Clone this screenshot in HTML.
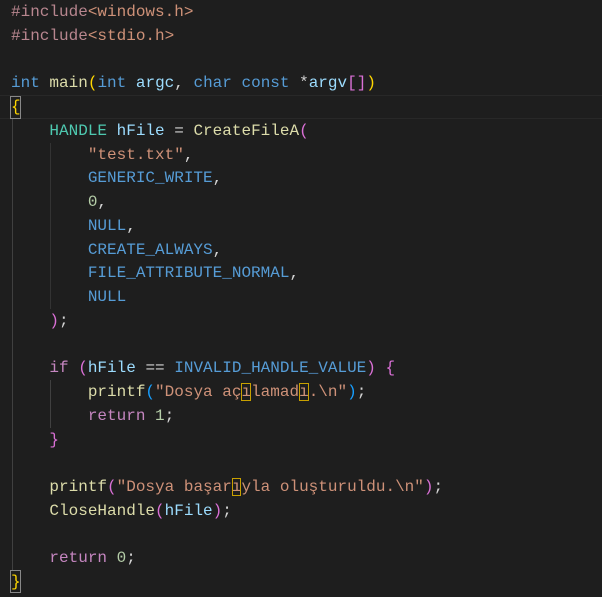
<!DOCTYPE html><html><head><style>
html,body{margin:0;padding:0;background:#1e1e1e;width:602px;height:597px;overflow:hidden;position:relative}
pre{position:absolute;left:11px;top:1px;margin:0;font:16px/23.75px "Liberation Mono","DejaVu Sans Mono",monospace;color:#d4d4d4;white-space:pre}
.p{color:#b8868f}.s{color:#ce9178}.k{color:#569cd6}.f{color:#dcdcaa}.v{color:#9cdcfe}.t{color:#4ec9b0}.n{color:#b5cea8}.c{color:#c586c0}
.y{color:#ffd700}.m{color:#da70d6}.b{color:#179fff}
.u{outline:1px solid #c8a000;outline-offset:-1px}
.cur{position:absolute;left:0;right:0;top:95px;height:22px;border-top:1px solid #282828;border-bottom:1px solid #282828}
.g{position:absolute;width:1px;background:#404040}
.bm{position:absolute;border:1px solid #888;width:9px;height:21px}
</style></head><body>
<div class="cur"></div>
<div class="g" style="left:12px;top:119px;height:452px"></div>
<div class="g" style="left:50px;top:143px;height:166px;background:#333"></div>
<div class="g" style="left:50px;top:380px;height:48px"></div>
<div class="bm" style="left:10px;top:96px"></div>
<div class="bm" style="left:10px;top:570px"></div>
<pre><span class="p">#include</span><span class="s">&lt;windows.h&gt;</span>
<span class="p">#include</span><span class="s">&lt;stdio.h&gt;</span>

<span class="k">int</span> <span class="f">main</span><span class="y">(</span><span class="k">int</span> <span class="v">argc</span>, <span class="k">char</span> <span class="k">const</span> *<span class="v">argv</span><span class="m">[]</span><span class="y">)</span>
<span class="y">{</span>
    <span class="t">HANDLE</span> <span class="v">hFile</span> = <span class="f">CreateFileA</span><span class="m">(</span>
        <span class="s">"test.txt"</span>,
        <span class="k">GENERIC_WRITE</span>,
        <span class="n">0</span>,
        <span class="k">NULL</span>,
        <span class="k">CREATE_ALWAYS</span>,
        <span class="k">FILE_ATTRIBUTE_NORMAL</span>,
        <span class="k">NULL</span>
    <span class="m">)</span>;

    <span class="c">if</span> <span class="m">(</span><span class="v">hFile</span> == <span class="k">INVALID_HANDLE_VALUE</span><span class="m">)</span> <span class="m">{</span>
        <span class="f">printf</span><span class="b">(</span><span class="s">"Dosya aç<span class="u">ı</span>lamad<span class="u">ı</span>.\n"</span><span class="b">)</span>;
        <span class="c">return</span> <span class="n">1</span>;
    <span class="m">}</span>

    <span class="f">printf</span><span class="m">(</span><span class="s">"Dosya başar<span class="u">ı</span>yla oluşturuldu.\n"</span><span class="m">)</span>;
    <span class="f">CloseHandle</span><span class="m">(</span><span class="v">hFile</span><span class="m">)</span>;

    <span class="c">return</span> <span class="n">0</span>;
<span class="y">}</span></pre>
</body></html>
